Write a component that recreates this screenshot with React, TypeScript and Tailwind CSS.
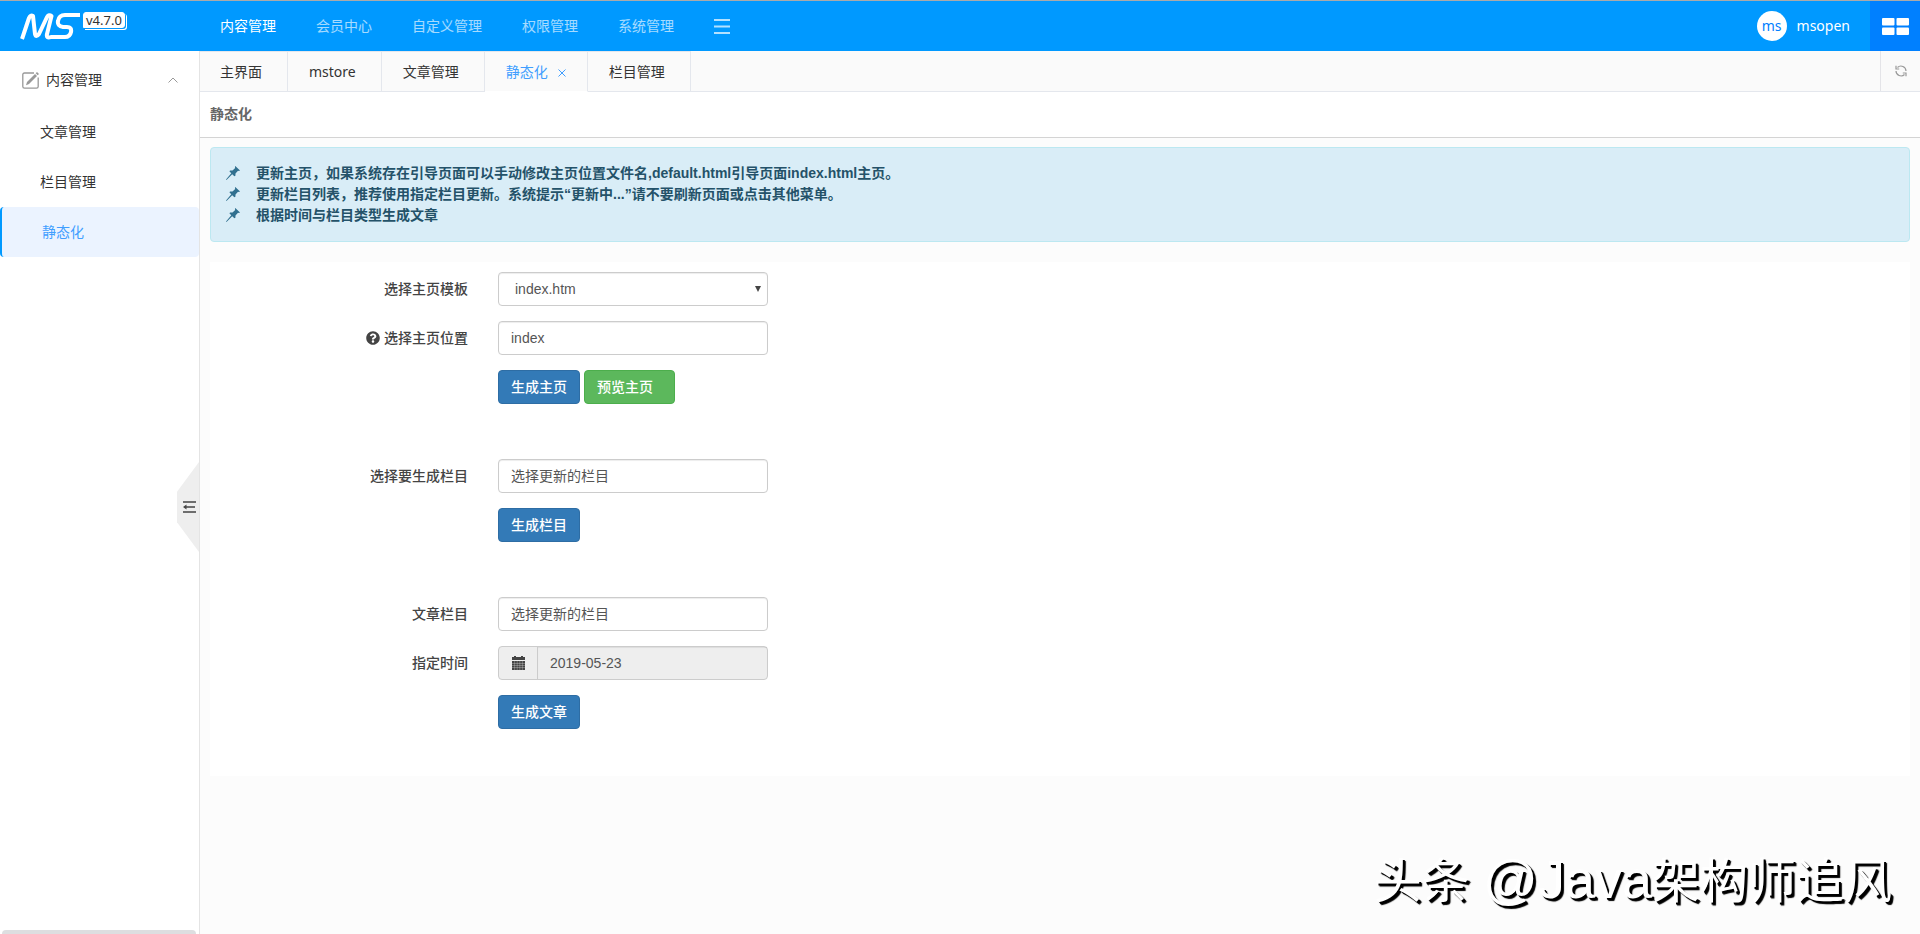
import { useState, type ReactNode } from "react";
import { FaQuestionCircle } from "react-icons/fa";

const navItems = ["内容管理", "会员中心", "自定义管理", "权限管理", "系统管理"];
const sideItems = ["文章管理", "栏目管理", "静态化"];
const tabs = ["主界面", "mstore", "文章管理", "静态化", "栏目管理"];
const tips = [
  "更新主页，如果系统存在引导页面可以手动修改主页位置文件名,default.html引导页面index.html主页。",
  "更新栏目列表，推荐使用指定栏目更新。系统提示“更新中...”请不要刷新页面或点击其他菜单。",
  "根据时间与栏目类型生成文章",
];

const fieldClass =
  "h-[34px] w-full rounded border border-[#ccc] bg-white px-3 text-sm text-[#555] shadow-[inset_0_1px_1px_rgba(0,0,0,0.075)] outline-none placeholder:text-[#555] focus:border-[#66afe9]";

function Logo() {
  return (
    <svg className="h-7 w-[62px]" viewBox="0 0 62 28" fill="none" stroke="#fff" strokeWidth="4" strokeLinejoin="round" aria-label="MS" role="img">
      <path d="M2 27 L9 6 Q10.500 2.500 13 4 L15 22 Q16 26 19 22 L27 5 Q29 2 31.500 4 L27 22 Q26 27 31 25 L45 25 Q50 25 51 20 Q52 15 47 15 L43 15 Q37 14 38 9 Q39 3 45 3 L60 3" />
    </svg>
  );
}

function Pin() {
  return (
    <svg className="mb-[2px] h-[14px] w-[14px] shrink-0" viewBox="0 0 14 14" fill="#31708f" aria-hidden="true">
      <path d="M9.300 0 L14 4.500 L13 5 L12 4.800 L9.500 7.400 L9.400 9.800 L8.400 10.300 L6.200 8.200 L0.500 14 L0 13.500 L5.300 7.300 L3.500 5.400 L4 4.500 L6.500 4.400 L9.200 2 L8.900 0.900 Z" />
    </svg>
  );
}

function Row({ label, htmlFor, help, children }: { label?: string; htmlFor?: string; help?: boolean; children: ReactNode }) {
  return (
    <div className="flex min-h-[34px] items-center">
      <div className="flex w-[288px] shrink-0 items-center justify-end gap-1 pr-[30px] font-medium text-[#444]">
        {help && <FaQuestionCircle className="h-[14px] w-[14px]" />}
        {label && <label htmlFor={htmlFor}>{label}</label>}
      </div>
      <div className="flex w-[270px] gap-1">{children}</div>
    </div>
  );
}

function PrimaryButton({ children }: { children: ReactNode }) {
  return (
    <button type="button" className="h-[34px] rounded border border-[#2e6da4] bg-[#337ab7] px-3 font-medium text-white hover:bg-[#286090]">
      {children}
    </button>
  );
}

export default function App() {
  const [home, setHome] = useState("index");
  return (
    <div className="flex min-h-screen flex-col bg-[#fcfcfc] font-['Noto_Sans','Noto_Sans_CJK_SC',sans-serif] text-sm text-[#333]">
      <header className="flex h-[51px] items-stretch border-t border-[#aaa] bg-[#0099ff] text-white">
        <div className="flex w-[200px] shrink-0 items-center pl-5">
          <Logo />
          <span className="mb-3 ml-[1px] rounded-[3px] rounded-bl-none border border-white bg-white px-[2px] text-[13px] leading-[14px] text-[#333] shadow-[1px_1px_0_#0099ff,2px_2px_0_#fff]">
            v4.7.0
          </span>
        </div>
        <nav className="flex items-center gap-10 pl-5">
          {navItems.map((item, i) => (
            <a key={item} href="#" className={i === 0 ? "text-white" : "text-white/65"}>
              {item}
            </a>
          ))}
          <button type="button" aria-label="更多" className="text-white/70">
            <svg className="h-4 w-4" viewBox="0 0 16 16" stroke="currentColor" strokeWidth="2" aria-hidden="true">
              <path d="M0 2H16M0 8.500H16M0 15H16" />
            </svg>
          </button>
        </nav>
        <a href="#" className="mr-5 ml-auto flex items-center gap-[10px]">
          <span className="flex h-[30px] w-[30px] items-center justify-center rounded-full bg-white text-[#0080ff]">ms</span>
          msopen
        </a>
        <button type="button" aria-label="快捷菜单" className="flex w-[50px] items-center justify-center bg-[#0080ff]">
          <svg className="h-[17px] w-[27px]" viewBox="0 0 27 17" fill="#fff" aria-hidden="true">
            <rect width="12.500" height="7.500" rx="1" />
            <rect x="14.500" width="12.500" height="7.500" rx="1" />
            <rect y="9.500" width="12.500" height="7.500" rx="1" />
            <rect x="14.500" y="9.500" width="12.500" height="7.500" rx="1" />
          </svg>
        </button>
      </header>

      <div className="flex flex-1">
        <aside className="relative flex w-[200px] shrink-0 flex-col border-r border-[#e4e4e4] bg-white">
          <button type="button" className="flex h-14 items-center gap-[7px] pt-[2px] pr-[21px] pl-[22px]">
            <svg className="h-[17px] w-[17px]" viewBox="0 0 17 17" fill="none" stroke="#999" strokeWidth="1.300" aria-hidden="true">
              <path d="M12 1H2.500Q.8 1 .8 2.500V14.500Q.8 16.200 2.500 16.200H14.500Q16.200 16.200 16.200 14.500V5.500" />
              <path d="M4 13.300L5 10L13 2L15 4L7 12Z" fill="#999" stroke="none" />
              <path d="M13.700 1.300L15 0L17 2L15.700 3.300Z" fill="#999" stroke="none" />
            </svg>
            内容管理
            <svg className="ml-auto h-[6px] w-[10px]" viewBox="0 0 10 6" fill="none" stroke="#999" aria-hidden="true">
              <path d="M.5 5.500L5 1L9.500 5.500" />
            </svg>
          </button>
          <nav className="flex flex-col">
            {sideItems.map((item) => (
              <a
                key={item}
                href="#"
                className={
                  item === "静态化"
                    ? "flex h-[50px] items-center rounded border-l-2 border-[#0099ff] bg-[#ebf3ff] pl-10 text-[#409eff]"
                    : "flex h-[50px] items-center pl-10"
                }
              >
                {item}
              </a>
            ))}
          </nav>
          <button
            type="button"
            aria-label="收起菜单"
            className="absolute top-[411px] right-0 flex h-[90px] w-[22px] items-center justify-end bg-[#eee] pr-[3px] [clip-path:polygon(100%_0,100%_100%,0_67%,0_33%)]"
          >
            <svg className="h-3 w-[13px]" viewBox="0 0 13 12" fill="none" stroke="#444" strokeWidth="1.500" aria-hidden="true">
              <path d="M0 1H13M3 6H12M0 11H13" />
              <path d="M3.500 3.500L0 6L3.500 8.500Z" fill="#444" stroke="none" />
            </svg>
          </button>
          <div className="mt-auto mr-[3px] ml-[2px] h-1 rounded-t bg-[#dddee0]" />
        </aside>

        <main className="flex min-w-0 flex-1 flex-col">
          <div className="flex h-[41px] border-b border-[#e4e7ed] bg-[#fafafa]">
            <div role="tablist" className="-mb-px flex">
              {tabs.map((tab) => {
                const active = tab === "静态化";
                return (
                  <button
                    key={tab}
                    type="button"
                    role="tab"
                    aria-selected={active}
                    className={
                      active
                        ? "flex items-center gap-[9px] border-t border-r border-b border-[#e4e7ed] border-b-white bg-[#fafafa] pr-5 pl-[21px] text-[#409eff]"
                        : "flex items-center border-t border-r border-b border-[#e4e7ed] pr-[25px] pl-[21px] first:pl-5"
                    }
                  >
                    {tab}
                    {active && (
                      <svg className="mt-[2px] h-[10px] w-[10px]" viewBox="0 0 10 10" stroke="#409eff" aria-hidden="true">
                        <path d="M1.500 1.500L8.500 8.500M8.500 1.500L1.500 8.500" />
                      </svg>
                    )}
                  </button>
                );
              })}
            </div>
            <button type="button" aria-label="刷新" className="ml-auto flex w-10 items-center justify-center border-l border-[#e4e4e8]">
              <svg className="h-3 w-3" viewBox="0 0 12 12" fill="none" stroke="#999" strokeWidth="1.200" aria-hidden="true">
                <path d="M2.500 2.500A5 5 0 0 1 11 6M9.500 9.500A5 5 0 0 1 1 6" />
                <path d="M1 .8V4H4.200M11 11.200V8H7.800" />
              </svg>
            </button>
          </div>

          <h1 className="flex h-[46px] items-center border-b border-[#d4d4d4] bg-white px-[10px] pb-[2px] font-bold text-[#666]">静态化</h1>

          <div className="flex flex-col gap-5 px-[10px] pt-[9px] font-['Liberation_Sans','Noto_Sans_CJK_SC',sans-serif]">
            <ul className="rounded border border-[#bce8f1] bg-[#d9edf7] p-[15px] font-bold text-[#245269]">
              {tips.map((tip) => (
                <li key={tip} className="flex items-center gap-4 leading-[21px]">
                  <Pin />
                  <span>{tip}</span>
                </li>
              ))}
            </ul>

            <form className="flex flex-col gap-[55px] bg-white pt-[10px] pb-[47px]" onSubmit={(e) => e.preventDefault()}>
              <div className="flex flex-col gap-[15px]">
                <Row label="选择主页模板" htmlFor="template">
                  <div className="relative w-full">
                    <select id="template" className={fieldClass + " appearance-none pl-4"}>
                      <option>index.htm</option>
                    </select>
                    <svg className="pointer-events-none absolute top-[14px] right-[7px] h-[6px] w-[6px]" viewBox="0 0 6 6" fill="#444" aria-hidden="true">
                      <path d="M0 0H6L3 6Z" />
                    </svg>
                  </div>
                </Row>
                <Row label="选择主页位置" htmlFor="position" help>
                  <input id="position" className={fieldClass} value={home} onChange={(e) => setHome(e.target.value)} />
                </Row>
                <Row>
                  <PrimaryButton>生成主页</PrimaryButton>
                  <button type="button" className="h-[34px] rounded border border-[#4cae4c] bg-[#5cb85c] pr-[21px] pl-3 font-medium text-white hover:bg-[#449d44]">
                    预览主页
                  </button>
                </Row>
              </div>

              <div className="flex flex-col gap-[15px]">
                <Row label="选择要生成栏目" htmlFor="column">
                  <input id="column" className={fieldClass} placeholder="选择更新的栏目" />
                </Row>
                <Row>
                  <PrimaryButton>生成栏目</PrimaryButton>
                </Row>
              </div>

              <div className="flex flex-col gap-[15px]">
                <Row label="文章栏目" htmlFor="article">
                  <input id="article" className={fieldClass} placeholder="选择更新的栏目" />
                </Row>
                <Row label="指定时间" htmlFor="date">
                  <div className="flex h-[34px] w-full rounded border border-[#ccc] bg-[#eee] text-[#555]">
                    <span className="flex w-[39px] shrink-0 items-center justify-center border-r border-[#ccc]">
                      <svg className="h-[14px] w-[13px]" viewBox="0 0 13 14" fill="#444" aria-hidden="true">
                        <path d="M0 1H2V0H4V1H9V0H11V1H13V4H0Z" />
                        <path d="M0 5H13V14H0Z" />
                        <path d="M0 7.500H13M0 9.500H13M0 11.500H13M2.600 5V14M5.200 5V14M7.800 5V14M10.400 5V14" stroke="#eee" strokeWidth=".3" />
                      </svg>
                    </span>
                    <input id="date" readOnly defaultValue="2019-05-23" className="min-w-0 flex-1 px-3 shadow-[inset_0_1px_1px_rgba(0,0,0,0.075)] outline-none" />
                  </div>
                </Row>
                <Row>
                  <PrimaryButton>生成文章</PrimaryButton>
                </Row>
              </div>
            </form>
          </div>
        </main>
      </div>

      <div className="pointer-events-none fixed right-[28px] bottom-[16px] font-['Liberation_Sans','Noto_Sans_CJK_SC',sans-serif] text-5xl leading-[72px] text-white [text-shadow:2px_2px_0_#000,3px_3px_1px_#000]">
        头条 <span className="text-[54px]">@Java</span>架构师追风
      </div>
    </div>
  );
}
